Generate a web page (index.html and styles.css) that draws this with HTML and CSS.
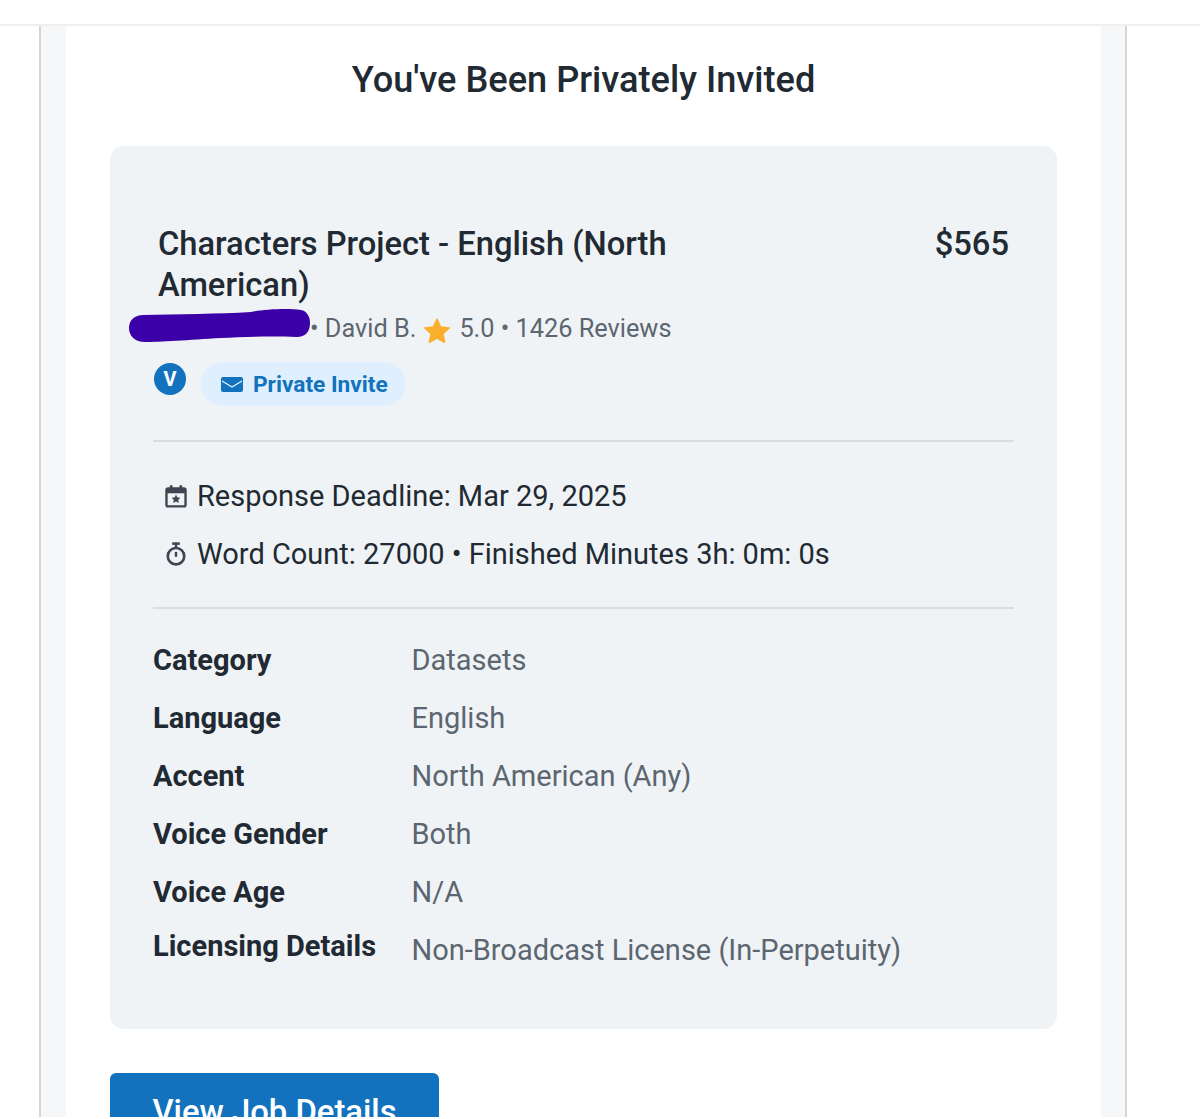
FILE: index.html
```html
<!DOCTYPE html>
<html>
<head lang="en">
    <meta charset="UTF-8">
    <title>Private Invite</title>
    <link rel="stylesheet" href="styles.css">
</head>
<body>
<div class="topbar"></div>
<div class="frame">
    <div class="mail">
        <h1 class="title">You've Been Privately Invited</h1>
        <div class="card">
            <div class="job-head">
                <h2 class="job-name">Characters Project - English (North American)</h2>
                <div class="job-price">$565</div>
            </div>
            <div class="job-meta">
                <svg class="scribble" width="182" height="34" viewBox="0 0 182 34">
                    <path d="M0 17C0 9 6 4 14 4C50 3 90 3 122 1C135 -2 160 -3 172 -1C178 0 181 6 181 12C181 21 176 26 168 26C140 25 112 26 92 27C60 29 30 31 16 31C6 31 0 25 0 17Z" fill="#3b00a8"/>
                </svg>
                <span class="author">• David B.</span>
                <svg class="star" width="30" height="30" viewBox="0 0 24 24">
                    <path d="M12 2.5 14.9 8.8 21.8 9.6 16.7 14.2 18.1 21 12 17.6 5.9 21 7.3 14.2 2.2 9.6 9.1 8.8Z" fill="#fbb02d" stroke="#fbb02d" stroke-width="1.2" stroke-linejoin="round"/>
                </svg>
                <span>5.0 • 1426 Reviews</span>
            </div>
            <div class="badges">
                <span class="verified">V</span>
                <span class="invite">
                    <svg width="22" height="15" viewBox="0 0 22 15">
                        <rect width="22" height="15" rx="2" fill="#1272bd"/>
                        <path d="M1 4 11 10 21 4" fill="none" stroke="#dfeffd" stroke-width="1.4"/>
                    </svg>
                    Private Invite
                </span>
            </div>
            <div class="facts">
                <div class="fact">
                    <svg width="26" height="26" viewBox="0 0 24 24" fill="none" stroke="#3d4650">
                        <rect x="3.2" y="5" width="17.6" height="16.6" rx="1.6" stroke-width="2.2"/>
                        <path d="M3 7.5h18" stroke-width="4"/>
                        <path d="M7.5 2v4M16.5 2v4" stroke-width="2.4"/>
                        <path d="M12 11.4l1.1 2.2 2.4.3-1.8 1.7.5 2.4-2.2-1.2-2.2 1.2.5-2.4-1.8-1.7 2.4-.3z" fill="#3d4650" stroke-width=".6"/>
                    </svg>
                    Response Deadline: Mar 29, 2025
                </div>
                <div class="fact">
                    <svg width="26" height="26" viewBox="0 0 24 24" fill="none" stroke="#3d4650">
                        <circle cx="12" cy="14" r="7.6" stroke-width="2.4"/>
                        <path d="M8.5 2.4h7" stroke-width="2.4"/>
                        <path d="M12 3v3.4" stroke-width="2.2"/>
                        <path d="M12 10v4.6" stroke-width="2.2"/>
                    </svg>
                    Word Count: 27000 • Finished Minutes 3h: 0m: 0s
                </div>
            </div>
            <div class="details">
                <div class="label">Category</div><div class="value">Datasets</div>
                <div class="label">Language</div><div class="value">English</div>
                <div class="label">Accent</div><div class="value">North American (Any)</div>
                <div class="label">Voice Gender</div><div class="value">Both</div>
                <div class="label">Voice Age</div><div class="value">N/A</div>
                <div class="label last">Licensing Details</div><div class="value">Non-Broadcast License (In-Perpetuity)</div>
            </div>
        </div>
        <a href="javascript:;" class="btn">View Job Details</a>
    </div>
</div>
</body>
</html>
```
FILE: styles.css
```css
* { margin: 0; padding: 0; box-sizing: border-box; text-decoration: none; }
html, body { height: 1119px; overflow: hidden; }
body { background: #fff; font-family: Roboto, "Liberation Sans", sans-serif; color: #212a33; }

.topbar { height: 26px; border-bottom: 2px solid #efefef; }

.frame { width: 1088px; height: 1091px; margin-left: 39px; padding: 0 24px 0 25px; overflow: hidden;
    background: #f6f7f9; border-left: 2px solid #d4d5d8; border-right: 2px solid #d4d5d8; }
.mail { background: #fff; height: 1091px; padding: 0 44px; }

.title { padding-top: 33px; height: 120px; text-align: center; font-size: 36.2px; line-height: 41px; font-weight: 500; }

.card { height: 883px; padding: 78px 43px 0; background: #f0f3f6; border-radius: 14px; }

.job-head { display: flex; justify-content: space-between; padding: 0 5px; }
.job-name { width: 560px; font-size: 32.7px; line-height: 41px; font-weight: 500; }
.job-price { font-size: 32.7px; line-height: 41px; font-weight: 500; }

.job-meta { display: flex; align-items: center; height: 34px; margin-top: 5px; margin-left: -24px;
    font-size: 25.3px; color: #5b6670; }
.job-meta span { white-space: pre; }
.job-meta .author { margin-left: -1px; }
.scribble { flex: none; overflow: visible; }
.star { margin: 6px 7px 0 6px; flex: none; }

.badges { display: flex; align-items: center; margin-top: 17px; height: 44px; padding-left: 1px; }
.verified { display: flex; align-items: center; justify-content: center; width: 32px; height: 32px;
    margin-top: -10px; border-radius: 50%; background: #1272bd; color: #fff; font-size: 20px; font-weight: 700; }
.invite { display: flex; align-items: center; gap: 10px; height: 44px; margin-left: 15px; padding: 0 18px 0 20px;
    border-radius: 22px; background: #dfeffd; color: #1272bd; font-size: 22.7px; font-weight: 700; }

.facts { margin-top: 34px; padding: 25px 10px 0; height: 169px; border-top: 2px solid #d9dce0; border-bottom: 2px solid #d9dce0; }
.fact { display: flex; align-items: center; gap: 8px; height: 58px; font-size: 29px; }
.fact svg { flex: none; }

.details { display: grid; grid-template-columns: 258.5px 1fr; grid-auto-rows: 58px; margin-top: 22px; font-size: 29px; line-height: 58px; }
.label { font-weight: 700; color: #212a33; }
.label.last { line-height: 50px; }
.value { color: #5b6670; }

.btn { display: block; width: 329px; height: 90px; margin-top: 44px; padding-top: 20px; border-radius: 6px;
    background: #1272bd; color: #fff; text-align: center; font-size: 32.8px; font-weight: 500; }
```
